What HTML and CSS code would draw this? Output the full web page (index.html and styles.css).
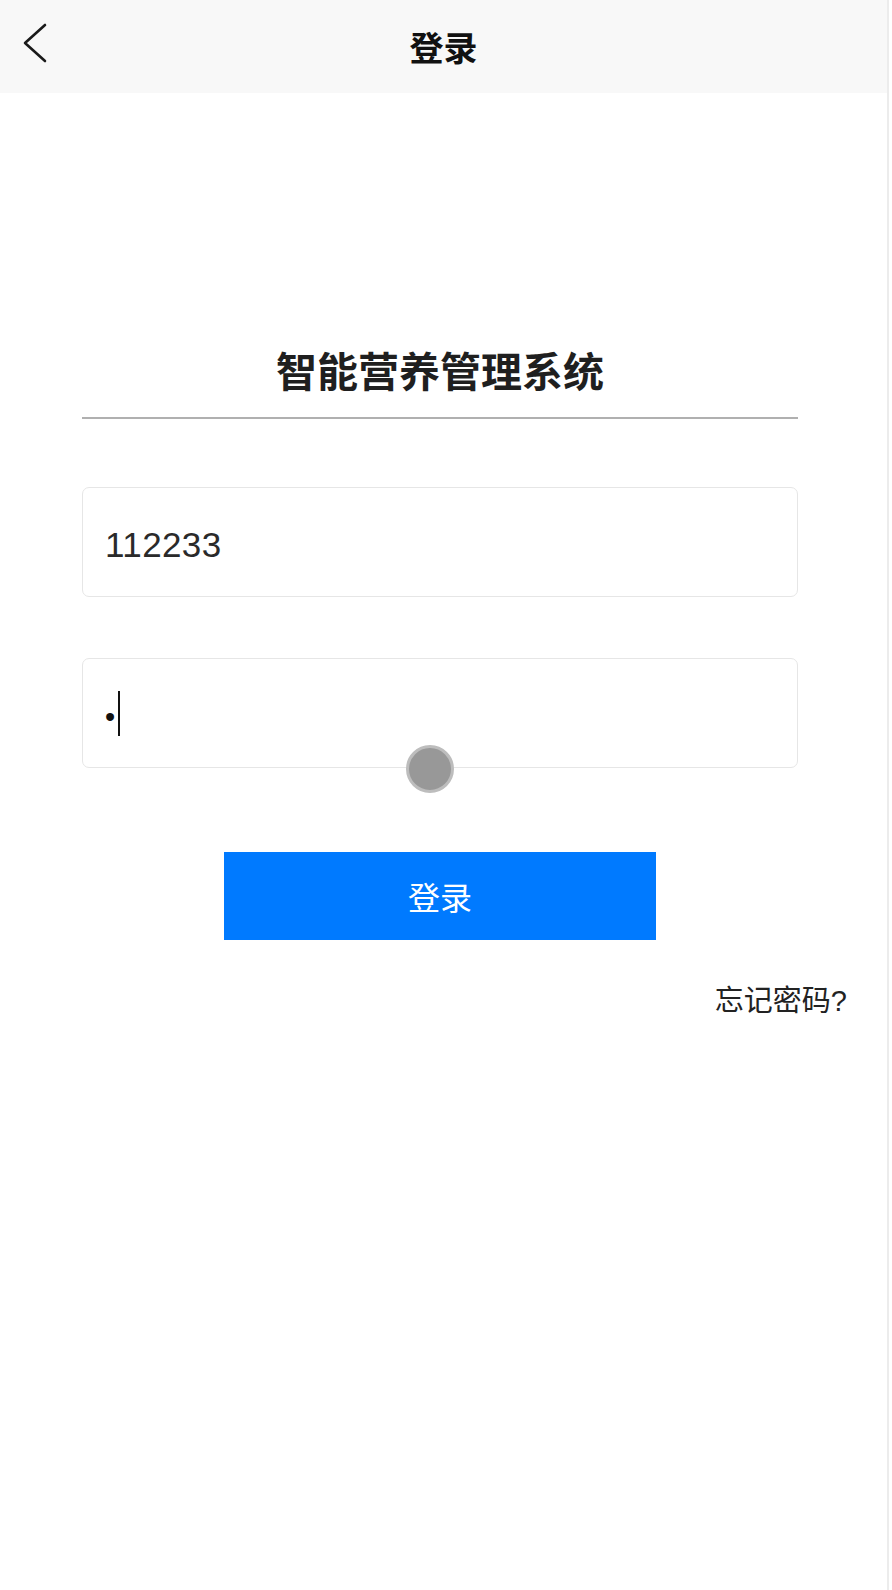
FILE: index.html
```html
<!DOCTYPE html>
<html lang="zh-CN">
  <head>
    <meta charset="utf-8" />
    <meta name="viewport" content="width=device-width, initial-scale=1" />
    <title>登录</title>
    <link rel="stylesheet" href="styles.css">
  </head>
  <body>
    <div class="app">
      <!-- Nav bar -->
      <header class="navbar">
        <a class="navbar-back" href="#">
          <svg width="30" height="44" viewBox="0 0 30 44">
            <polyline points="23,3 3,21 23,39" fill="none" stroke="#1a1a1a" stroke-width="2.6" stroke-linecap="round" stroke-linejoin="round" />
          </svg>
        </a>
        <div class="navbar-title">登录</div>
        <div class="navbar-side"></div>
      </header>

      <main class="main">
        <div class="login-form">
          <h1 class="login-title">智能营养管理系统</h1>

          <div class="field field-first">
            <span class="field-value">112233</span>
          </div>

          <div class="field field-second">
            <span class="field-value field-password">•</span>
            <span class="field-caret"></span>
          </div>

          <!-- touch indicator from the screen recording -->
          <div class="touch-dot"></div>

          <button class="login-btn" type="button">登录</button>
        </div>

        <div class="forget-row">
          <a class="forget-link" href="#">忘记密码?</a>
        </div>
      </main>
    </div>
  </body>
</html>
```

FILE: styles.css
```css
* {
  margin: 0;
  padding: 0;
  box-sizing: border-box;
}

body {
  font-family: 'Liberation Sans', 'Noto Sans CJK SC', sans-serif;
  background-color: #ffffff;
  color: #1a1a1a;
}

.app {
  width: 889px;
  min-height: 1590px;
  border-right: 2px solid #ececec;
}

/* Nav bar */
.navbar {
  height: 93px;
  background: #f8f8f8;
  display: grid;
  grid-template-columns: 1fr auto 1fr;
  align-items: center;
  padding: 0 22px;
}

.navbar-back {
  display: flex;
  align-items: center;
  height: 44px;
  margin-top: -6px;
}

.navbar-title {
  font-family: 'Noto Sans CJK SC', sans-serif;
  font-size: 34px;
  font-weight: 700;
  line-height: 40px;
  color: #111;
}

/* Form */
.main {
  width: 880px;
}

.login-form {
  position: relative;
  margin: 0 82px;
  padding-top: 251px;
  display: flex;
  flex-direction: column;
}

.login-title {
  font-family: 'Noto Sans CJK SC', sans-serif;
  font-size: 41px;
  font-weight: 700;
  line-height: 50px;
  text-align: center;
  color: #1f1f1f;
  padding-bottom: 23px;
  border-bottom: 2px solid #b0b0b0;
}

.field {
  height: 110px;
  border: 1px solid #e6e6e6;
  border-radius: 7px;
  display: flex;
  align-items: center;
  padding: 6px 22px 0;
}

.field-first {
  margin-top: 68px;
}

.field-second {
  margin-top: 61px;
  padding-top: 0;
}

.field-value {
  font-size: 35px;
  color: #2a2a2a;
  letter-spacing: 0.4px;
}

.field-password {
  font-size: 29px;
  line-height: 1;
  margin-top: 8px;
  margin-right: 2px;
  color: #111;
}

.field-caret {
  width: 2px;
  height: 45px;
  background: #111;
}

.touch-dot {
  position: absolute;
  left: 324px;
  top: 652px;
  width: 48px;
  height: 48px;
  border-radius: 50%;
  background: #989898;
  border: 3px solid #bdbdbd;
}

.login-btn {
  align-self: center;
  margin-top: 84px;
  width: 432px;
  height: 88px;
  border: none;
  background: #007aff;
  color: #ffffff;
  font-family: 'Noto Sans CJK SC', sans-serif;
  font-size: 32px;
  cursor: pointer;
}

.forget-row {
  display: flex;
  justify-content: flex-end;
  padding-right: 33px;
  margin-top: 44px;
}

.forget-link {
  font-size: 29px;
  line-height: 34px;
  color: #222;
  text-decoration: none;
}
```
